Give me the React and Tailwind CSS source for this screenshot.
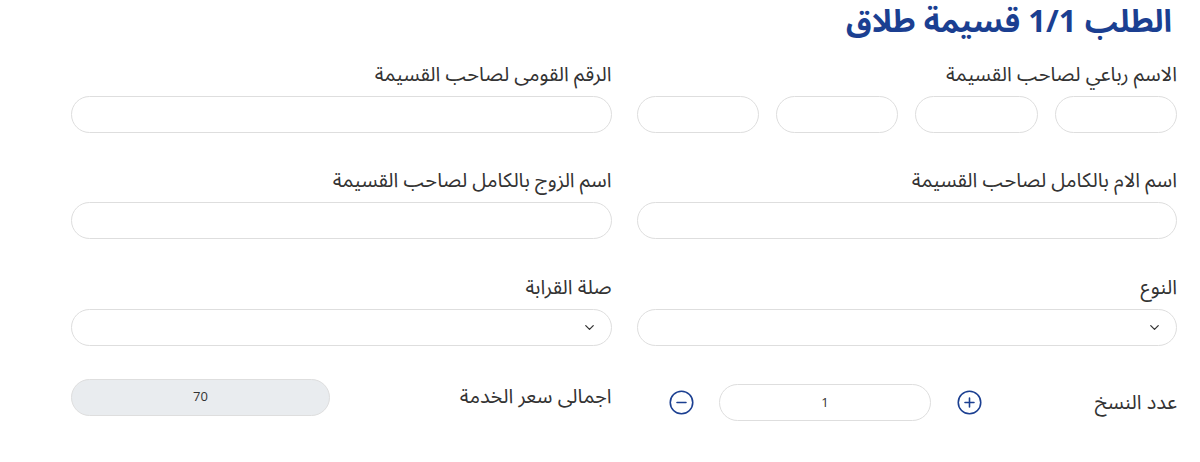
import { CirclePlus, CircleMinus, ChevronDown } from 'lucide-react';

const font = { fontFamily: '"Noto Sans Arabic", "DejaVu Sans", sans-serif' };

function Field({ className = '' }) {
  return <div className={`h-[37px] rounded-full border border-[#dedede] bg-white ${className}`} />;
}

function Select() {
  return (
    <div className="h-[37px] rounded-full border border-[#dedede] bg-white flex items-center pr-[14px]">
      <ChevronDown size={15} strokeWidth={2} className="text-[#333]" />
    </div>
  );
}

function Label({ children }) {
  return <div className="text-[20px] leading-[24px] text-[#333] mb-[9px]">{children}</div>;
}

export default function App() {
  return (
    <div dir="rtl" className="w-[1200px] h-[462px] bg-white pr-[23px] pl-[71px]" style={font}>
      <h1 className="text-[31px] leading-[44px] font-bold text-[#1b3f91] pr-[5px]">الطلب 1/1 قسيمة طلاق</h1>

      <div className="grid grid-cols-2 gap-x-[25px] mt-[19px]">
        <div>
          <Label>الاسم رباعي لصاحب القسيمة</Label>
          <div className="grid grid-cols-4 gap-[17px]">
            <Field />
            <Field />
            <Field />
            <Field />
          </div>
        </div>
        <div>
          <Label>الرقم القومى لصاحب القسيمة</Label>
          <Field />
        </div>

        <div className="mt-[36px]">
          <Label>اسم الام بالكامل لصاحب القسيمة</Label>
          <Field />
        </div>
        <div className="mt-[36px]">
          <Label>اسم الزوج بالكامل لصاحب القسيمة</Label>
          <Field />
        </div>

        <div className="mt-[37px]">
          <Label>النوع</Label>
          <Select />
        </div>
        <div className="mt-[37px]">
          <Label>صلة القرابة</Label>
          <Select />
        </div>

        <div className="mt-[38px] flex items-center">
          <div className="w-[194px] text-[20px] text-[#333]">عدد النسخ</div>
          <CirclePlus size={27} strokeWidth={1.4} className="text-[#1b3f91]" />
          <div className="w-[212px] h-[37px] mr-[25px] ml-[24px] rounded-full border border-[#dedede] flex items-center justify-center text-[13px] text-[#333]" style={{ fontFamily: '"Open Sans", sans-serif' }}>1</div>
          <CircleMinus size={27} strokeWidth={1.4} className="text-[#1b3f91]" />
        </div>
        <div className="mt-[27px] flex items-center">
          <div className="flex-1 text-[20px] text-[#333]">اجمالى سعر الخدمة</div>
          <div className="w-[259px] h-[37px] rounded-full border border-[#dedede] bg-[#e9ecef] flex items-center justify-center text-[13px] text-[#333]" style={{ fontFamily: '"Open Sans", sans-serif' }}>70</div>
        </div>
      </div>
    </div>
  );
}
